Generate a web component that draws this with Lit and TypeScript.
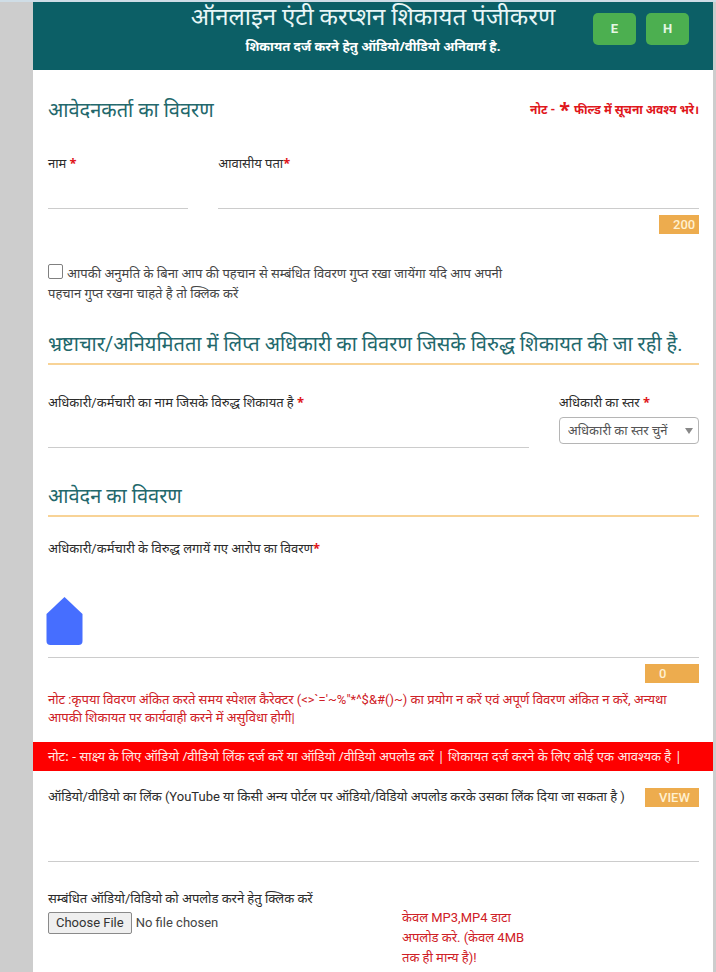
import { LitElement, html, css } from "lit";
import { customElement } from "lit/decorators.js";

@customElement("app-root")
export class AppRoot extends LitElement {
  static styles = css`
    :host {
      display: block;
      min-height: 100vh;
      box-sizing: border-box;
      padding: 2px 3px 0 33px;
      background: linear-gradient(#cfdde6 2px, #cdcdcd 2px);
      font-family: Roboto, "Noto Sans", sans-serif;
      font-size: 13px;
      line-height: 20px;
      color: #333;
    }
    * {
      box-sizing: border-box;
    }
    .page {
      min-height: calc(100vh - 2px);
      background: #fff;
    }
    .top {
      display: grid;
      grid-template-columns: 1fr auto 1fr;
      height: 68px;
      background: #0c5f66;
      color: #fff;
      text-align: center;
    }
    .titles {
      grid-column: 2;
    }
    h1,
    h2,
    p {
      margin: 0;
      font-weight: 400;
    }
    h1 {
      font-size: 24px;
      line-height: 30px;
      color: #e8f6f7;
    }
    .sub {
      line-height: 28px;
      font-weight: 700;
    }
    .sub,
    .consent,
    .bar,
    .req,
    .star {
      font-family: "Noto Sans", sans-serif;
    }
    .langs {
      display: flex;
      justify-content: flex-end;
      gap: 10px;
      padding: 11px 24px 0 0;
    }
    .lang {
      width: 43px;
      height: 32px;
      padding: 0;
      border: 0;
      border-radius: 5px;
      background: #4caf50;
      color: #e4f7e4;
      font: 700 13px/32px Roboto, sans-serif;
    }
    .block {
      padding: 0 14px 0 15px;
    }
    .head {
      display: flex;
      justify-content: space-between;
      align-items: center;
      height: 40px;
      margin-top: 20px;
    }
    h2 {
      font-size: 20px;
      line-height: 40px;
      color: #23686c;
    }
    .ruled {
      margin-top: 22px;
      border-bottom: 2px solid #f8d396;
    }
    .later {
      margin-top: 29px;
    }
    .req,
    .must {
      color: #e0161b;
      font-weight: 700;
    }
    .must {
      display: flex;
      gap: 4px;
      font-size: 12px;
    }
    .star {
      font-size: 20px;
    }
    .req {
      line-height: 1;
    }
    .row {
      display: grid;
      column-gap: 30px;
    }
    .person {
      grid-template-columns: 7fr 24fr;
      margin-top: 24px;
    }
    .officer {
      grid-template-columns: 24fr 7fr;
      margin-top: 28px;
    }
    .field {
      display: flex;
      flex-direction: column;
      min-width: 0;
    }
    label {
      display: block;
      color: #2b2b2b;
    }
    .line {
      display: block;
      width: 100%;
      height: 35px;
      padding: 0;
      border: 0;
      border-bottom: 1px solid #ccc;
      border-radius: 0;
      background: transparent;
      font: inherit;
      outline: 0;
      resize: none;
    }
    .area {
      height: 99px;
    }
    .tall {
      height: 55px;
    }
    .badge {
      display: block;
      width: 54px;
      height: 19px;
      padding: 0 14px;
      border: 0;
      background: #edac4e;
      color: #fff0d0;
      font: 500 13px/19px Roboto, sans-serif;
      text-align: left;
    }
    .end {
      margin: 6px 0 0 auto;
    }
    .count {
      width: 40px;
      padding: 0 4px 0 14px;
    }
    .consent {
      width: 470px;
      max-width: 100%;
      margin-top: 29px;
    }
    .consent label {
      color: #444;
    }
    .tick {
      appearance: none;
      width: 15px;
      height: 15px;
      margin: 0 4px 0 0;
      border: 1px solid #808080;
      border-radius: 2px;
      background: #fff;
      vertical-align: -1px;
    }
    .pick {
      position: relative;
      display: block;
      margin-top: 4px;
    }
    select {
      appearance: none;
      display: block;
      width: 100%;
      height: 27px;
      padding: 0 8px;
      border: 1px solid #b5b5b5;
      border-radius: 4px;
      background: #fff;
      color: #555;
      font: inherit;
    }
    .arrow {
      position: absolute;
      top: 11px;
      right: 6px;
      border: 4px solid transparent;
      border-top: 6px solid #888;
      border-bottom: 0;
    }
    .claim {
      margin-top: 22px;
    }
    .story {
      position: relative;
    }
    .handle {
      position: absolute;
      left: -2px;
      bottom: 13px;
      width: 37px;
      height: 48px;
    }
    .note {
      margin-top: 8px;
      line-height: 18px;
      color: #cf2026;
    }
    .bar {
      margin-top: 15px;
      padding: 0 15px;
      background: #fe0000;
      color: #ffe9e4;
      line-height: 29px;
    }
    .media {
      display: flex;
      justify-content: space-between;
      align-items: center;
      margin-top: 16px;
    }
    .upload {
      display: grid;
      grid-template-columns: 354px 1fr;
      margin-top: 27px;
    }
    .file {
      display: block;
      width: 100%;
      height: 22px;
      margin-top: 3px;
      font: 400 13px/20px Roboto, sans-serif;
      color: #444;
    }
    .file::file-selector-button {
      height: 22px;
      margin: 0 4px 0 0;
      padding: 0 7px;
      border: 1px solid #8a8a8a;
      border-radius: 2px;
      background: #efefef;
      color: #333;
      font: 400 13px/20px Roboto, sans-serif;
    }
    .limit {
      width: 130px;
      margin-top: 19px;
      color: #cf2026;
    }
  `;

  render() {
    return html`
      <main class="page">
        <header class="top">
          <div class="titles">
            <h1>ऑनलाइन एंटी करप्शन शिकायत पंजीकरण</h1>
            <p class="sub">शिकायत दर्ज करने हेतु ऑडियो/वीडियो अनिवार्य है.</p>
          </div>
          <div class="langs">
            <button class="lang" type="button">E</button>
            <button class="lang" type="button">H</button>
          </div>
        </header>

        <form>
          <section class="block">
            <div class="head">
              <h2>आवेदनकर्ता का विवरण</h2>
              <p class="must"><span>नोट -</span><span class="star">*</span><span>फील्ड में सूचना अवश्य भरे।</span></p>
            </div>
            <div class="row person">
              <div class="field">
                <label for="name">नाम <span class="req">*</span></label>
                <input class="line" id="name" type="text" />
              </div>
              <div class="field">
                <label for="address">आवासीय पता<span class="req">*</span></label>
                <input class="line" id="address" type="text" />
                <output class="badge end count" for="address">200</output>
              </div>
            </div>
            <div class="consent">
              <label><input class="tick" type="checkbox" />आपकी अनुमति के बिना आप की पहचान से सम्बंधित विवरण गुप्त रखा जायेंगा यदि आप अपनी पहचान गुप्त रखना चाहते है तो क्लिक करें</label>
            </div>
          </section>

          <section class="block">
            <div class="head ruled">
              <h2>भ्रष्टाचार/अनियमितता में लिप्त अधिकारी का विवरण जिसके विरुद्ध शिकायत की जा रही है.</h2>
            </div>
            <div class="row officer">
              <div class="field">
                <label for="officer">अधिकारी/कर्मचारी का नाम जिसके विरुद्ध शिकायत है <span class="req">*</span></label>
                <input class="line" id="officer" type="text" />
              </div>
              <div class="field">
                <label for="level">अधिकारी का स्तर <span class="req">*</span></label>
                <span class="pick">
                  <select id="level"><option>अधिकारी का स्तर चुनें</option></select>
                  <span class="arrow"></span>
                </span>
              </div>
            </div>
          </section>

          <section class="block">
            <div class="head ruled later"><h2>आवेदन का विवरण</h2></div>
            <label class="claim" for="story">अधिकारी/कर्मचारी के विरुद्ध लगायें गए आरोप का विवरण<span class="req">*</span></label>
            <div class="story">
              <textarea class="line area" id="story"></textarea>
              <svg class="handle" viewBox="0 0 37 48" aria-hidden="true">
                <path fill="#466eff" d="M18.5 0 36.5 17V44a4 4 0 0 1-4 4H4.500a4 4 0 0 1-4-4V17Z" />
              </svg>
            </div>
            <output class="badge end" for="story">0</output>
            <p class="note">नोट :कृपया विवरण अंकित करते समय स्पेशल कैरेक्टर (&lt;&gt;\`='~%"*^$&amp;#()~) का प्रयोग न करें एवं अपूर्ण विवरण अंकित न करें, अन्यथा आपकी शिकायत पर कार्यवाही करने में असुविधा होगी|</p>
          </section>

          <p class="bar">नोट: - साक्ष्य के लिए ऑडियो /वीडियो लिंक दर्ज करें या ऑडियो /वीडियो अपलोड करें | शिकायत दर्ज करने के लिए कोई एक आवश्यक है |</p>

          <section class="block">
            <div class="media">
              <label for="link">ऑडियो/वीडियो का लिंक (YouTube या किसी अन्य पोर्टल पर ऑडियो/विडियो अपलोड करके उसका लिंक दिया जा सकता है )</label>
              <button class="badge" type="button">VIEW</button>
            </div>
            <input class="line tall" id="link" type="text" />
            <div class="upload">
              <div>
                <label for="file">सम्बंधित ऑडियो/विडियो को अपलोड करने हेतु क्लिक करें</label>
                <input class="file" id="file" type="file" />
              </div>
              <p class="limit">केवल MP3,MP4 डाटा अपलोड करे. (केवल 4MB तक ही मान्य है)!</p>
            </div>
          </section>
        </form>
      </main>
    `;
  }
}
